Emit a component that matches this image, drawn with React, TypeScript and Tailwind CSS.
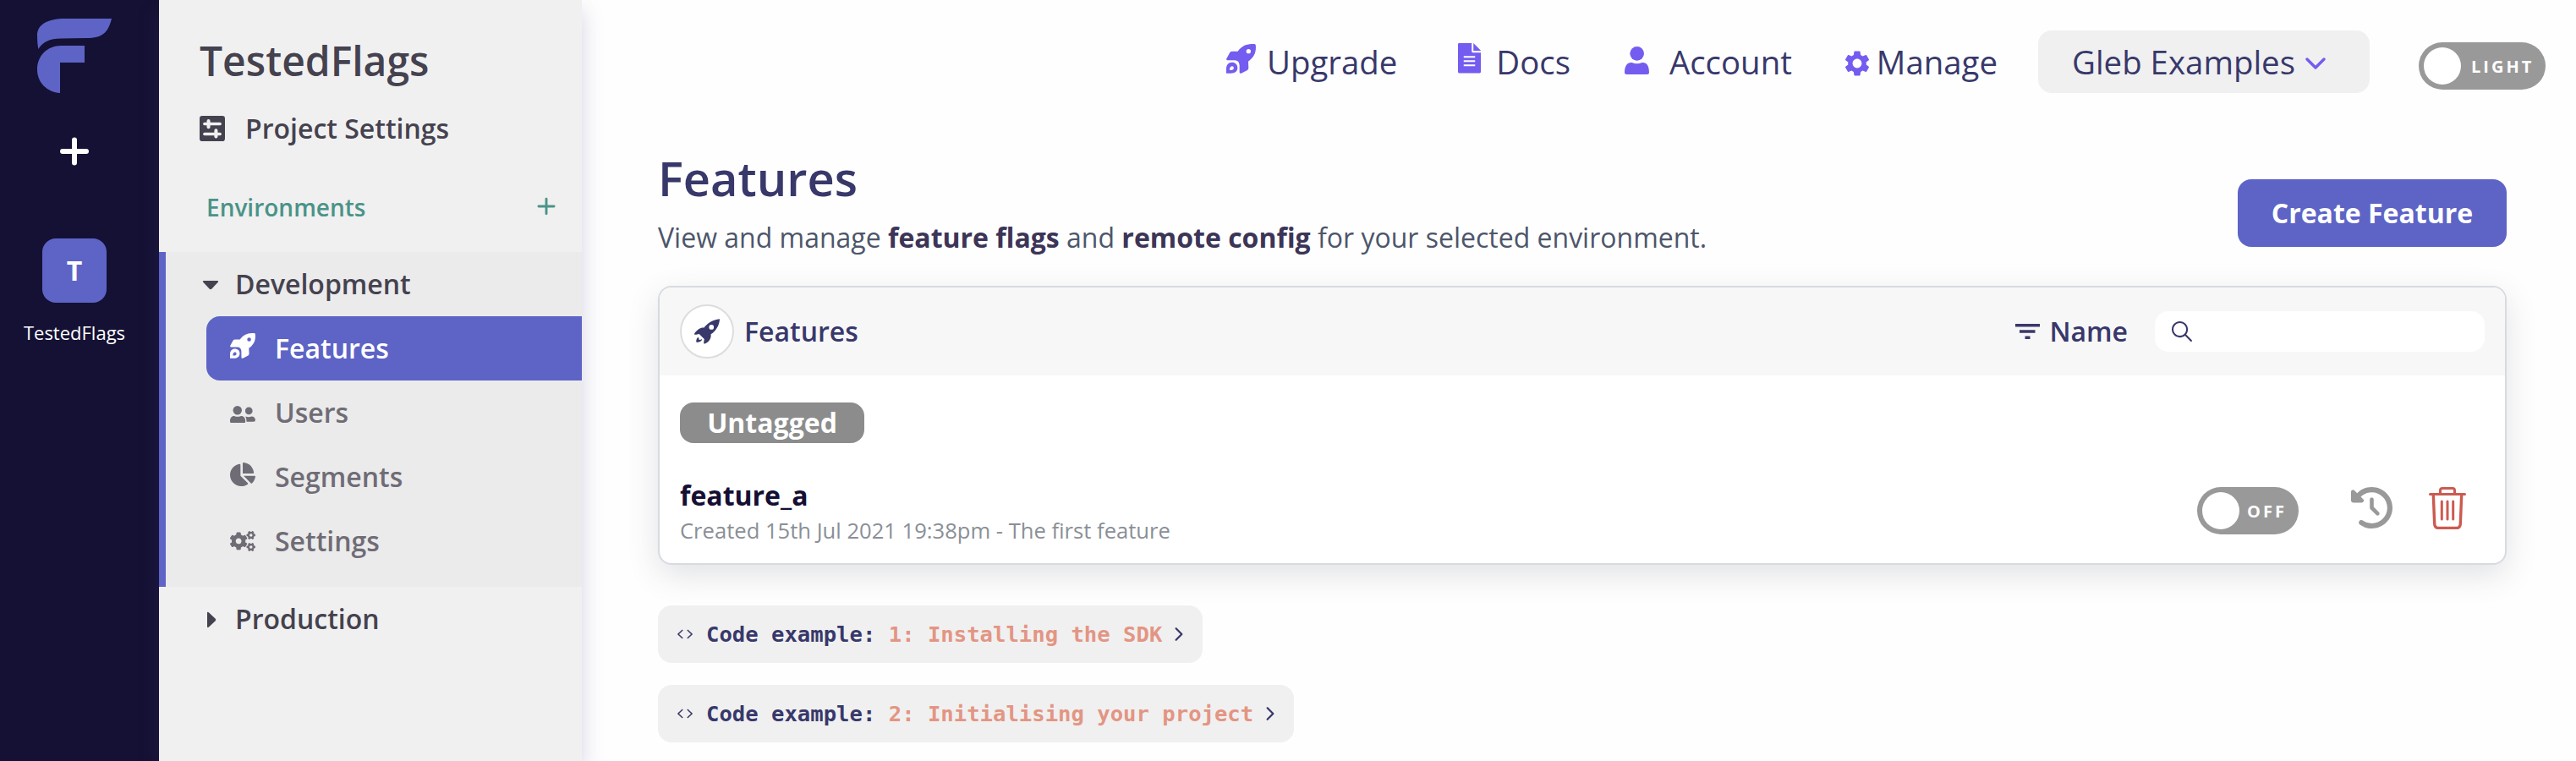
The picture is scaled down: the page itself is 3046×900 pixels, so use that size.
import type { ReactNode } from "react";
import { FaChartPie, FaCogs } from "react-icons/fa";
import { FaClockRotateLeft } from "react-icons/fa6";
import { IoIosArrowForward, IoIosCode, IoIosSearch } from "react-icons/io";
import { MdSettings } from "react-icons/md";

type IconProps = { className?: string };

function Logo({ className }: IconProps) {
  return (
    <svg viewBox="0 0 88 88" className={className} fill="currentColor">
      <path d="M88 0H34C10 0 0 8 0 20C0 26 .5 31 1.3 36C6 28 15 23.5 28 23.5L58 23C78 23 84 16 88 0Z" />
      <path d="M56 32V52H27V88C12 87 0 76 0 60C0 44 12 32 28 32Z" />
    </svg>
  );
}

function Plus({ className, stroke }: IconProps & { stroke: number }) {
  return (
    <svg viewBox="0 0 34 34" className={className} stroke="currentColor" strokeWidth={stroke} strokeLinecap="round">
      <path d="M17 3.500V30.500M3 17H31" />
    </svg>
  );
}

function RocketLaunch({ className }: IconProps) {
  return (
    <svg viewBox="0 0 105 105" className={className} fill="currentColor" fillRule="evenodd">
      <path d="M100 0Q104 0 104.500 5C107 30 98 48 78 62L79 85Q79 90 75 93L53 104Q47 106 47 100L47 76Q46 58 30 58L4 58Q-1 57 1 52L13 30Q16 26 21 26L41 26C56 6 72 -1 100 0ZM79 18A8 8 0 1 0 79 34A8 8 0 1 0 79 18Z" />
      <path d="M0 104L0 88C0 74 8 65 20 65C32 65 40 73 40 84C40 98 30 104 16 104ZM12 93C11 86 14 79 21 79C27 79 28 86 25 90C22 93 17 93 12 93Z" />
    </svg>
  );
}

function Rocket({ className }: IconProps) {
  return (
    <svg viewBox="0 0 89 88" className={className} fill="currentColor" fillRule="evenodd">
      <path d="M89 0C65 2 45 15 34 31C20 30 12 38 1 50C-1 55 2 56 6 55L17 53L35 71L33 84Q33 88 37 87C50 82 60 70 58 54C74 44 88 24 89 0ZM60 20.500A8.500 8.500 0 1 0 60 37.500A8.500 8.500 0 1 0 60 20.500Z" />
      <path d="M7 82C6 73 8 68 14 64C16 68 17 70 16 73L22 74C24 69 27 71 26 75C22 80 16 82 7 82Z" />
    </svg>
  );
}

function FileLines({ className }: IconProps) {
  return (
    <svg viewBox="0 0 80 105" className={className} fill="currentColor" fillRule="evenodd">
      <path d="M4 0H48V29Q48 33 52 33H80V101Q80 105 76 105H4Q0 105 0 101V4Q0 0 4 0ZM20 45V51H60V45ZM20 60V66H60V60ZM20 75V81H60V75Z" />
      <path d="M54 0L80 26V27H54Z" />
    </svg>
  );
}

function Person({ className }: IconProps) {
  return (
    <svg viewBox="0 0 87 99" className={className} fill="currentColor">
      <circle cx="44" cy="25" r="25" />
      <path d="M26 57Q44 65 62 57C80 56 87 70 87 93Q87 99 80 99H7Q0 99 0 93C0 70 8 56 26 57Z" />
    </svg>
  );
}

function People({ className }: IconProps) {
  return (
    <svg viewBox="0 0 89 60" className={className} fill="currentColor">
      <circle cx="26" cy="15.500" r="15.500" />
      <circle cx="66" cy="17.500" r="13" />
      <path d="M16 36Q26 39 37 36C48 35 54 42 54 54Q54 60 48 60H6Q0 60 0 54C0 42 6 35 16 36Z" />
      <path d="M54 37Q66 41 75 37C84 37 89 43 89 50Q89 56 82 56H58Q59 45 54 37Z" />
    </svg>
  );
}

function SlidersSquare({ className }: IconProps) {
  return (
    <svg viewBox="0 0 88 88" className={className} fill="none">
      <rect width="88" height="88" rx="9" fill="currentColor" />
      <path d="M17 28H71M17 63H71" stroke="#f0f0f0" strokeWidth="10" strokeLinecap="round" />
      <path d="M31 18V39M57 51V72" stroke="#f0f0f0" strokeWidth="12" strokeLinecap="round" />
    </svg>
  );
}

function Trash({ className }: IconProps) {
  return (
    <svg viewBox="0 0 44 50" className={className} fill="none" stroke="currentColor" strokeWidth="3" strokeLinecap="round">
      <path d="M13.500 8V4Q13.500 1.500 16 1.500H28Q30.500 1.500 30.500 4V8M1.500 8.500H42.500" />
      <path d="M5.300 9L6.700 43.500Q7 48.500 11.500 48.500H32.500Q37 48.500 37.300 43.500L38.700 9" strokeWidth="3.400" />
      <path d="M15.300 17V38M22 17V38M28.700 17V38" />
    </svg>
  );
}

function NavItem({ icon, label, active }: { icon: ReactNode; label: string; active?: boolean }) {
  return (
    <div
      className={
        active
          ? "ml-12 flex h-[76px] items-center rounded-l-2xl bg-[#5d64c6] pl-7 text-white"
          : "ml-12 flex h-[76px] items-center pl-7 text-[#6f6c76]"
      }
    >
      <span className="flex w-[30px]">{icon}</span>
      <span className="ml-[23px]">{label}</span>
    </div>
  );
}

function Toggle({ label, className }: { label: string; className: string }) {
  return (
    <div className={`flex h-14 items-center rounded-full bg-[#999] pl-1.5 text-xl font-bold tracking-[3px] text-white ${className}`}>
      <span className="size-11 rounded-full bg-white" />
      <span className="pt-px">{label}</span>
    </div>
  );
}

function CodeExample({ title }: { title: string }) {
  return (
    <div className="flex h-[68px] w-fit items-center rounded-2xl bg-[#f0f0f0] pr-[16px] pl-[20px] font-['DejaVu_Sans_Mono',monospace] text-[25.6px] font-bold whitespace-pre text-[#38386b]">
      <IoIosCode className="mr-[13px] size-6" />
      <span>Code example: </span>
      <span className="text-[#e39583]">{title}</span>
      <IoIosArrowForward className="ml-2 size-6" />
    </div>
  );
}

function Sidebar() {
  return (
    <aside className="z-10 w-[500px] shrink-0 bg-[#f0f0f0] text-[32px] font-semibold text-[#45424f] shadow-[0_12px_24px_rgba(70,60,130,0.22)]">
      <h2 className="mt-[39px] ml-12 text-5xl leading-[65px]">TestedFlags</h2>
      <div className="mt-[26px] ml-12 flex h-[44px] items-center">
        <SlidersSquare className="size-[30px]" />
        <span className="ml-6">Project Settings</span>
      </div>
      <div className="mt-[45px] mb-[27px] flex h-[52px] items-center justify-between pr-[31px] pl-14 text-[28px] text-[#4a9388]">
        <span>Environments</span>
        <Plus stroke={4.500} className="mt-[-3px] size-[22px]" />
      </div>
      <section className="h-[396px] border-l-8 border-[#5d64c6] bg-[#ebebeb]">
        <div className="flex h-[76px] items-center pl-[43px]">
          <svg viewBox="0 0 20 12" className="mt-0.5 w-5" fill="currentColor">
            <path d="M2 1H18Q20 1 18.500 3L11.500 10.500Q10 12 8.500 10.500L1.500 3Q0 1 2 1Z" />
          </svg>
          <span className="ml-[19px]">Development</span>
        </div>
        <NavItem active label="Features" icon={<RocketLaunch className="-mt-1.5 size-[30px]" />} />
        <NavItem label="Users" icon={<People className="mt-1 w-[30px]" />} />
        <NavItem label="Segments" icon={<FaChartPie className="-mt-1.5 size-[30px]" />} />
        <NavItem label="Settings" icon={<FaCogs className="size-[30px]" />} />
      </section>
      <div className="flex h-[76px] items-center pl-14">
        <svg viewBox="0 0 12 20" className="mt-0.5 w-3" fill="currentColor">
          <path d="M1 2Q1 0 3 1.500L10.500 8.500Q12 10 10.500 11.500L3 18.500Q1 20 1 18Z" />
        </svg>
        <span className="ml-[22px]">Production</span>
      </div>
    </aside>
  );
}

function TopBar() {
  return (
    <header className="flex h-[146px] items-start justify-end pr-9 text-[38.4px] text-[#38386b]">
      <nav className="mt-9 flex h-[74px] items-center">
        <RocketLaunch className="-mt-2 size-[35px] text-[#745cf0]" />
        <span className="ml-[13px] pt-0.5">Upgrade</span>
        <FileLines className="-mt-2 ml-[72px] w-[27px] text-[#745cf0]" />
        <span className="ml-[18px] pt-0.5">Docs</span>
        <Person className="-mt-1 ml-[64px] w-[29px] text-[#745cf0]" />
        <span className="ml-[24px] pt-0.5">Account</span>
        <MdSettings className="mt-[3px] ml-[59px] size-9 text-[#745cf0]" />
        <span className="ml-[5px] pt-0.5">Manage</span>
      </nav>
      <div className="mt-9 ml-12 flex h-[74px] w-[392px] items-center rounded-2xl bg-[#f0f0f0] pl-10">
        <span className="pt-0.5">Gleb Examples</span>
        <svg viewBox="0 0 24 14" className="mt-[3px] ml-3 w-6 text-[#745cf0]" fill="none" stroke="currentColor" strokeWidth="3.400" strokeLinecap="round" strokeLinejoin="round">
          <path d="M2 2L12 12L22 2" />
        </svg>
      </div>
      <Toggle label="LIGHT" className="mt-[50px] ml-[58px] w-[150px] gap-3" />
    </header>
  );
}

function FeatureCard() {
  return (
    <section className="h-[330px] overflow-hidden rounded-2xl border-2 border-[#d7dbe0] bg-white shadow-[0_12px_36px_rgba(60,70,90,0.15)]">
      <div className="flex h-[104px] items-center bg-[#f7f7f7] px-6 text-[32px] font-semibold text-[#38386b]">
        <span className="flex size-16 items-center justify-center rounded-full border-2 border-[#ddd] bg-white">
          <Rocket className="size-[30px]" />
        </span>
        <span className="ml-3">Features</span>
        <svg viewBox="0 0 29 18" className="ml-auto w-[29px]" fill="currentColor">
          <path d="M0 0H29V3.500H0ZM5 7.300H23.500V10.700H5ZM11.500 14.500H17.500V18H11.500Z" />
        </svg>
        <span className="ml-[11px]">Name</span>
        <div className="ml-[32px] flex h-12 w-[390px] items-center rounded-2xl bg-white pl-4">
          <IoIosSearch className="size-8" />
        </div>
      </div>
      <div className="px-6">
        <div className="mt-8 flex h-12 w-[218px] items-center justify-center rounded-2xl bg-[#8c8c8c] text-[32px] font-bold text-white">
          Untagged
        </div>
        <div className="mt-[38px] flex items-start justify-between">
          <div>
            <div className="text-[32px] leading-[48px] font-bold text-[#150f33]">feature_a</div>
            <div className="text-[25.6px] leading-[36px] text-[#8a8f96]">Created 15th Jul 2021 19:38pm - The first feature</div>
          </div>
          <div className="mt-[14px] mr-[22px] flex items-start">
            <Toggle label="OFF" className="w-[120px] gap-[9px]" />
            <FaClockRotateLeft className="ml-[62px] size-[49px] text-[#999]" />
            <Trash className="ml-[43px] h-[50px] w-11 text-[#cb5b50]" />
          </div>
        </div>
      </div>
    </section>
  );
}

export default function App() {
  return (
    <div className="flex h-[900px] w-[3046px] overflow-hidden bg-[#fefefe] font-['Open_Sans',sans-serif]">
      <aside className="flex w-[188px] shrink-0 flex-col items-center bg-[#141134] pr-3 text-white">
        <Logo className="mt-[22px] size-[88px] text-[#5d64c6]" />
        <Plus stroke={6} className="mt-[52px] size-[34px]" />
        <div className="mt-[86px] flex size-[76px] items-center justify-center rounded-2xl bg-[#5d64c6] text-[32px] font-bold">T</div>
        <div className="mt-5 text-[22px] leading-[31px]">TestedFlags</div>
      </aside>
      <Sidebar />
      <main className="grow">
        <TopBar />
        <div className="pr-[82px] pl-[90px]">
          <div className="flex h-[192px] items-start justify-between">
            <div>
              <h1 className="mt-[26px] text-[56px] leading-[76px] font-semibold text-[#38386b]">Features</h1>
              <p className="mt-[9px] text-[32px] leading-[48px] text-[#4d566b]">
                View and manage <b className="text-[#3c3557]">feature flags</b> and{" "}
                <b className="text-[#3c3557]">remote config</b> for your selected environment.
              </p>
            </div>
            <button className="mt-[66px] h-20 w-[318px] rounded-2xl bg-[#5d64c6] text-[32px] font-bold text-white">Create Feature</button>
          </div>
          <FeatureCard />
          <div className="mt-12 flex flex-col gap-[26px]">
            <CodeExample title="1: Installing the SDK" />
            <CodeExample title="2: Initialising your project" />
          </div>
        </div>
      </main>
    </div>
  );
}
